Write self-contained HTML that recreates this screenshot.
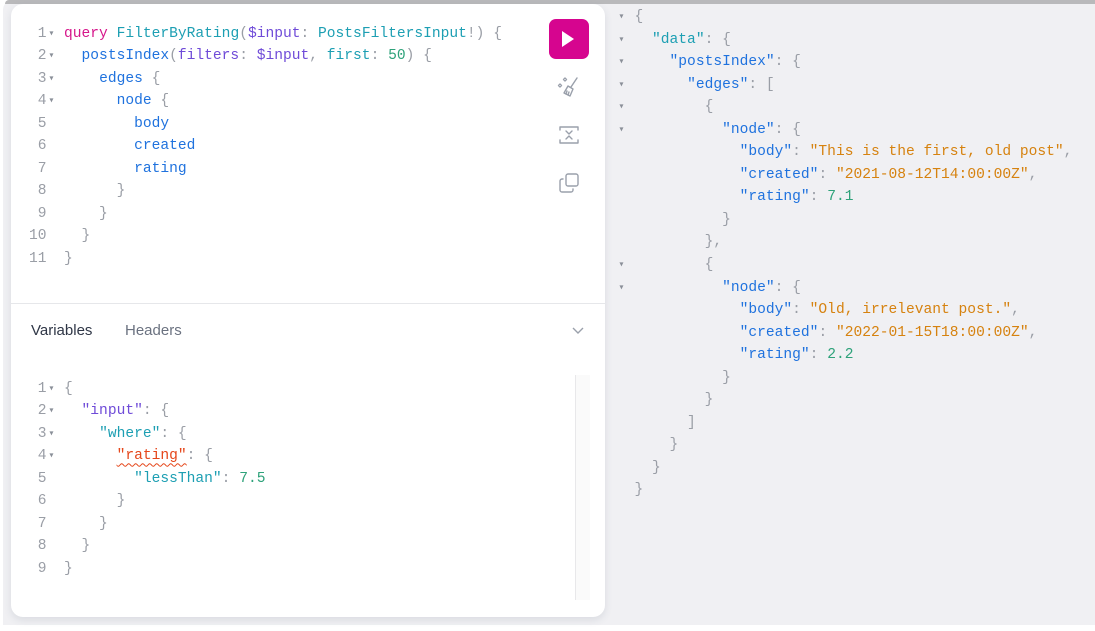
<!DOCTYPE html>
<html><head><meta charset="utf-8"><style>
*{margin:0;padding:0;box-sizing:border-box}
body{width:1095px;height:631px;background:#fff;position:relative;overflow:hidden;font-family:"Liberation Sans",sans-serif}
#bg{position:absolute;left:3px;top:0;width:1092px;height:625px;background:#f0f0f3;border-top-left-radius:10px}
#bar{position:absolute;left:5px;top:0;width:1090px;height:4px;background:#b9b9bb;border-top-left-radius:6px}
#card{position:absolute;left:11px;top:4px;width:594px;height:613px;background:#fff;border-radius:12px;box-shadow:0 3px 8px rgba(60,70,100,.12)}
pre{position:absolute;font-family:"Liberation Mono",monospace;font-size:14.6px;line-height:22.45px;color:#9a9ea6;white-space:pre}
.k{color:#d6168b}.d{color:#1d9fb3}.v{color:#6f4bd8}.f{color:#1f72de}.n{color:#2ea27a}.s{color:#d6820f}.t{color:#1d9fb3}
.e{color:#e5461a;text-decoration:underline wavy #e5461a;text-decoration-thickness:1px;text-underline-offset:3px}
.a{display:inline-block;width:8.76px;overflow:visible;text-align:center;font-size:14.6px;line-height:22.45px;height:22.45px;vertical-align:top;transform:scale(.7);color:#8a8f98}
#run{position:absolute;left:549px;top:19px;width:40px;height:40px;background:#d6058f;border-radius:7px}
#div{position:absolute;left:11px;top:303px;width:594px;height:1px;background:#e6e7ea}
.tab{position:absolute;top:322px;font-size:15px}
#sb{position:absolute;left:575px;top:375px;width:15px;height:225px;background:#fafafa;border-left:1px solid #e8e8ea}
</style></head><body>
<div id="bg"></div><div id="bar"></div>
<div id="card"></div>
<pre style="left:29px;top:23px;">
 1<span class="a">▾</span> <span class="k">query</span> <span class="d">FilterByRating</span>(<span class="v">$input</span>: <span class="d">PostsFiltersInput</span>!) {
 2<span class="a">▾</span>   <span class="f">postsIndex</span>(<span class="v">filters</span>: <span class="v">$input</span>, <span class="d">first</span>: <span class="n">50</span>) {
 3<span class="a">▾</span>     <span class="f">edges</span> {
 4<span class="a">▾</span>       <span class="f">node</span> {
 5          <span class="f">body</span>
 6          <span class="f">created</span>
 7          <span class="f">rating</span>
 8        }
 9      }
10    }
11  }</pre>
<div id="run"><svg width="40" height="40" viewBox="0 0 40 40"><path d="M13 12 L25 20 L13 28 Z" fill="#fff"/></svg></div>
<svg style="position:absolute;left:556px;top:74px" width="26" height="26" viewBox="0 0 26 26" fill="none" stroke="#9aa0ab" stroke-width="1.4" stroke-linecap="round" stroke-linejoin="round">
<path d="M21 4 L15 13"/><path d="M12 12 L17 15 L14 22 L8 19 Z"/><path d="M10 20 L11 17 M12 21 L13 18"/>
<path d="M9 4 L10.5 5.5 L9 7 L7.5 5.5 Z"/><path d="M4 10 L5.5 11.5 L4 13 L2.5 11.5 Z"/></svg>
<svg style="position:absolute;left:558px;top:124px" width="22" height="22" viewBox="0 0 22 22" fill="none" stroke="#9aa0ab" stroke-width="1.4" stroke-linecap="round" stroke-linejoin="round">
<path d="M2 6 V3 H20 V6"/><path d="M2 16 V19 H20 V16"/><path d="M8 7 L11 10 L14 7"/><path d="M8 15 L11 12 L14 15"/></svg>
<svg style="position:absolute;left:558px;top:172px" width="22" height="22" viewBox="0 0 22 22" fill="none" stroke="#9aa0ab" stroke-width="1.4" stroke-linecap="round" stroke-linejoin="round">
<rect x="8" y="2" width="12" height="12" rx="2"/><path d="M5 7 H4 A2 2 0 0 0 2 9 V18 A2 2 0 0 0 4 20 H13 A2 2 0 0 0 15 18 V17"/></svg>
<div id="div"></div>
<div class="tab" style="left:31px;color:#2f3646">Variables</div>
<div class="tab" style="left:125px;color:#6b7280">Headers</div>
<svg style="position:absolute;left:571px;top:326px" width="14" height="10" viewBox="0 0 14 10" fill="none" stroke="#9aa0ab" stroke-width="1.4"><path d="M2 2 L7 7 L12 2"/></svg>
<div id="sb"></div>
<pre style="left:29px;top:378px;">
 1<span class="a">▾</span> {
 2<span class="a">▾</span>   <span class="v">"input"</span>: {
 3<span class="a">▾</span>     <span class="t">"where"</span>: {
 4<span class="a">▾</span>       <span class="e">"rating"</span>: {
 5          <span class="t">"lessThan"</span>: <span class="n">7.5</span>
 6        }
 7      }
 8    }
 9  }</pre>
<pre style="left:617px;top:6px;line-height:22.55px">
<span class="a">▾</span> {
<span class="a">▾</span>   <span class="t">"data"</span>: {
<span class="a">▾</span>     <span class="f">"postsIndex"</span>: {
<span class="a">▾</span>       <span class="f">"edges"</span>: [
<span class="a">▾</span>         {
<span class="a">▾</span>           <span class="f">"node"</span>: {
              <span class="f">"body"</span>: <span class="s">"This is the first, old post"</span>,
              <span class="f">"created"</span>: <span class="s">"2021-08-12T14:00:00Z"</span>,
              <span class="f">"rating"</span>: <span class="n">7.1</span>
            }
          },
<span class="a">▾</span>         {
<span class="a">▾</span>           <span class="f">"node"</span>: {
              <span class="f">"body"</span>: <span class="s">"Old, irrelevant post."</span>,
              <span class="f">"created"</span>: <span class="s">"2022-01-15T18:00:00Z"</span>,
              <span class="f">"rating"</span>: <span class="n">2.2</span>
            }
          }
        ]
      }
    }
  }</pre>
</body></html>
